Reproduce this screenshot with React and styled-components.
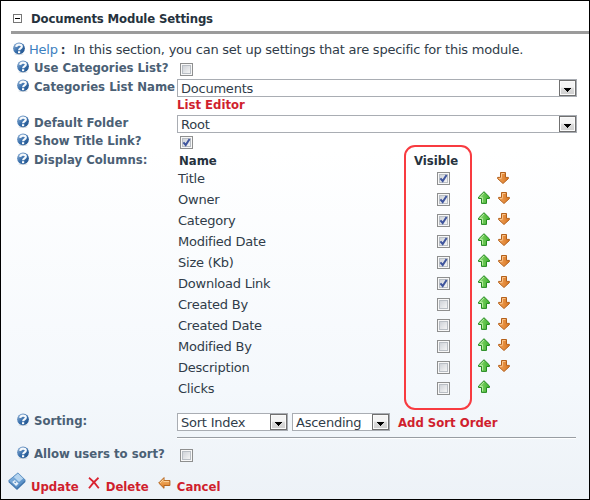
import React from "react";
import styled, { createGlobalStyle, css } from "styled-components";

const GlobalStyle = createGlobalStyle`
  * { box-sizing: border-box; }
  body { margin: 0; }
`;

const bold = css`
  font-family: "DejaVu Sans Condensed", "DejaVu Sans", sans-serif;
  font-weight: 700;
  letter-spacing: 0;
`;

const Panel = styled.main`
  width: 590px;
  height: 500px;
  display: flex;
  flex-direction: column;
  border: 1px solid #000;
  overflow: hidden;
  background: linear-gradient(#fff 0, #fff 150px, #f4f8fc 390px, #edf2f7 498px);
  color: #303c49;
  font: 13px/15px "DejaVu Sans", sans-serif;
  letter-spacing: -0.23px;
  white-space: pre;
`;

const SectionHeader = styled.header`
  display: flex;
  gap: 9px;
  height: 33px;
  margin-left: 10px;
  padding: 10px 0 0 2px;
  border-bottom: 3px solid #9b9b9b;
`;

const SectionTitle = styled.h1`
  ${bold}
  margin: 0;
  color: #26323d;
  font-size: 13px;
  letter-spacing: -0.15px;
`;

const CollapseBox = styled.span`
  display: grid;
  place-items: center;
  width: 9px;
  height: 9px;
  margin-top: 3px;
  border: 1px solid #777;
  background: #fff;
  &::after { content: ""; width: 5px; height: 1px; background: #000; }
`;

const HelpRow = styled.div`
  display: flex;
  height: 18px;
  margin: 8px 0 0 12px;
`;

const HelpLink = styled.a`
  margin-left: 4px;
  color: #3c7fc0;
`;

const HelpColon = styled.span`
  ${bold}
  margin: 0 8px 0 3px;
`;

const SettingRow = styled.div`
  display: grid;
  grid-template-columns: 160px 1fr;
  flex: none;
  height: ${(p) => p.$height}px;
  margin-left: 16px;
`;

const Label = styled.div`
  ${bold}
  display: flex;
  align-items: flex-start;
  gap: 5px;
  color: #4b6075;
`;

const RedLink = styled.a`
  ${bold}
  color: #d01f2e;
`;

const Check = styled.span`
  display: grid;
  place-items: center;
  width: 13px;
  height: 13px;
  margin: ${(p) => p.$margin || "3px 0 0 3px"};
  border: 1px solid #8e8f8f;
  background: #f5f5f5;
  box-shadow: inset 0 0 0 1px #f8f8f8, inset 0 0 0 2px #b9bec4;
  background-image: linear-gradient(135deg, #cbcfd5 10%, #f6f6f6 85%);
  svg { grid-area: 1 / 1; }
`;

const SelectBox = styled.div`
  display: flex;
  justify-content: space-between;
  width: ${(p) => p.$width}px;
  height: 18px;
  padding: 1px 0 0 3px;
  border: 1px solid #a9adb3;
  background: #fff;
`;

const SelectButton = styled.span`
  display: grid;
  place-items: center;
  width: 17px;
  height: 16px;
  margin-top: -1px;
  border: 1px solid #707070;
  background: linear-gradient(#f4f4f4 0 45%, #dcdcdc 50%, #cfcfcf);
  box-shadow: inset 0 0 0 1px #fafafa;
  padding-top: 3px;
`;

const Controls = styled.div`
  display: flex;
  gap: ${(p) => p.$gap || 0}px;
`;

const SortLink = styled(RedLink)`
  margin: 2px 0 0 4px;
`;

const Rule = styled.hr`
  width: 399px;
  height: 2px;
  margin: 6px 0 0;
  border: 0;
  border-top: 1px solid #989da3;
  background: #fff;
`;

const Columns = styled.div`
  position: relative;
  width: 400px;
  padding-top: 1px;
`;

const ColumnGrid = styled.div`
  display: grid;
  grid-template-columns: 227px 73px 20px 20px;
  height: ${(p) => p.$height}px;
  padding-left: 1px;
`;

const ColumnHeading = styled.strong`
  ${bold}
  padding-left: ${(p) => p.$indent}px;
  color: #26323d;
`;

const Highlight = styled.div`
  position: absolute;
  left: 227px;
  top: -7px;
  width: 68px;
  height: 265px;
  border: 2px solid #f83b40;
  border-radius: 11px;
`;

const MoveSlot = styled.span`
  display: block;
  height: 15px;
  margin: ${(p) => (p.$first ? "0 0 0 -1px" : "-1px 0 0")};
`;

const Footer = styled.footer`
  ${bold}
  display: flex;
  align-items: flex-start;
  margin-left: 7px;
`;

const Action = styled(RedLink)`
  margin: 7px ${(p) => p.$after}px 0 ${(p) => p.$before}px;
`;

const Icon = styled.svg`
  display: block;
  flex: none;
  margin-top: ${(p) => p.$top || 0}px;
`;

const Gradients = styled.svg`
  position: absolute;
  width: 0;
  height: 0;
`;

function HelpIcon() {
  return (
    <Icon width="12" height="13" viewBox="0 0 12 13">
      <ellipse cx="6" cy="12.1" rx="4.6" ry="0.8" fill="#a9b4c0" opacity="0.6" />
      <circle cx="6" cy="6.3" r="5.9" fill="url(#ball)" />
      <path d="M3.2 4.8C3.4 1.9 8.8 1.8 8.8 4.5C8.8 6.4 6.2 6.3 6.1 8.3" fill="none" stroke="#f6f9fc" strokeWidth="2.2" />
      <rect x="5" y="9.2" width="2.2" height="2" fill="#fff" />
    </Icon>
  );
}

function Checkbox({ checked, margin }) {
  return (
    <Check $margin={margin} role="checkbox" aria-checked={!!checked}>
      {checked && (
        <svg width="9" height="9" viewBox="0 0 9 9">
          <path d="M1.4 4.3L3.7 7L7.6 1" fill="none" stroke="#3f559d" strokeWidth="2" />
        </svg>
      )}
    </Check>
  );
}

function Select({ value, width }) {
  return (
    <SelectBox $width={width}>
      {value}
      <SelectButton>
        <svg width="7" height="4" viewBox="0 0 7 4" shapeRendering="crispEdges">
          <path d="M0 0H7V1H6V2H5V3H4V4H3V3H2V2H1V1H0Z" fill="#000" />
        </svg>
      </SelectButton>
    </SelectBox>
  );
}

function UpIcon() {
  return (
    <Icon width="12" height="13" viewBox="0 0 12 13">
      <path d="M6 .7L11.4 6V7.5H8.5V12.4H3.5V7.5H.6V6Z" fill="url(#green)" stroke="#268a22" />
      <path d="M6 2L2 6.4H4.5V11.3" fill="none" stroke="#b4ea9e" />
    </Icon>
  );
}

function DownIcon() {
  return (
    <Icon width="12" height="13" viewBox="0 0 12 13">
      <path d="M3.5 1.5H8.5V6.4H11.4V7.6L6 12.5L.6 7.6V6.4H3.5Z" fill="url(#orange)" stroke="#b3601b" />
      <path d="M4.5 6.8V2.5H7.5M2 7.4H4.5" fill="none" stroke="#f8c38b" />
    </Icon>
  );
}

function BackIcon() {
  return (
    <Icon width="13" height="12" viewBox="0 0 13 12" $top={5}>
      <path d="M6 .6V3.5H11.9V8.5H6V11.3L.7 6Z" fill="url(#orangeBack)" stroke="#b3651f" />
      <path d="M5.4 2.6L2 6M5.5 4.4H11" fill="none" stroke="#fbd29a" />
    </Icon>
  );
}

function DeleteIcon() {
  return (
    <Icon width="12" height="12" viewBox="0 0 12 12" $top={5}>
      <path d="M1 .8C4.5 3.4 7.9 7.2 10.8 11.2M10.5 .7C6.9 3.8 3.8 7.2 1 11.2" fill="none" stroke="#d92330" strokeWidth="1.8" />
    </Icon>
  );
}

function SaveIcon() {
  return (
    <Icon width="18" height="19" viewBox="0 0 18 19">
      <path d="M10 .7L17.4 8V10L9 18L.6 10.2V8.2Z" fill="#3f75ad" />
      <path d="M9.9 .9L17.2 8L8.6 15.8L.8 8.7Z" fill="url(#disk)" stroke="#5d90c3" strokeWidth=".7" />
      <path d="M5.8 5L10 1.5L15.2 6.6L11 10Z" fill="#b5d4ef" />
      <path d="M4.2 10L6.8 8L10.6 11.6L8 14Z" fill="#e9f2fa" />
      <path d="M6.1 10.2L7.2 9.3L8.4 10.4L7.3 11.3Z" fill="#5f91c4" />
    </Icon>
  );
}

const columns = [
  ["Title", true], ["Owner", true], ["Category", true], ["Modified Date", true],
  ["Size (Kb)", true], ["Download Link", true], ["Created By", false],
  ["Created Date", false], ["Modified By", false], ["Description", false], ["Clicks", false],
];

function Setting({ label, height, children }) {
  return (
    <SettingRow $height={height}>
      <Label><HelpIcon />{label}</Label>
      <div>{children}</div>
    </SettingRow>
  );
}

export default function App() {
  return (
    <Panel>
      <GlobalStyle />
      <Gradients>
        <defs>
          <linearGradient id="ball" x2="1" y2="1">
            <stop stopColor="#9dbbdc" /><stop offset=".5" stopColor="#3a70ac" /><stop offset="1" stopColor="#1b4d87" />
          </linearGradient>
          <linearGradient id="green" x2="1"><stop stopColor="#8edc75" /><stop offset="1" stopColor="#3fb02d" /></linearGradient>
          <linearGradient id="orange" x2="1"><stop stopColor="#f2a55d" /><stop offset="1" stopColor="#d8751f" /></linearGradient>
          <linearGradient id="orangeBack" x2="0" y2="1"><stop stopColor="#fbc37c" /><stop offset="1" stopColor="#d9761f" /></linearGradient>
          <linearGradient id="disk" x2="1" y2="1"><stop stopColor="#8ebbe4" /><stop offset="1" stopColor="#4a84c0" /></linearGradient>
        </defs>
      </Gradients>

      <SectionHeader>
        <CollapseBox />
        <SectionTitle>Documents Module Settings</SectionTitle>
      </SectionHeader>

      <HelpRow>
        <HelpIcon />
        <HelpLink>Help</HelpLink>
        <HelpColon>:</HelpColon>
        <span>In this section, you can set up settings that are specific for this module.</span>
      </HelpRow>

      <Setting label="Use Categories List?" height={19}><Checkbox /></Setting>
      <Setting label="Categories List Name" height={36}>
        <Select value="Documents" width={400} />
        <RedLink>List Editor</RedLink>
      </Setting>
      <Setting label="Default Folder" height={18}><Select value="Root" width={400} /></Setting>
      <Setting label="Show Title Link?" height={19}><Checkbox checked /></Setting>
      <Setting label="Display Columns:" height={261}>
        <Columns>
          <ColumnGrid $height={18}>
            <ColumnHeading $indent={1}>Name</ColumnHeading>
            <ColumnHeading $indent={9}>Visible</ColumnHeading>
          </ColumnGrid>
          {columns.map(([name, visible], i) => (
            <ColumnGrid $height={21} key={name}>
              <span>{name}</span>
              <Checkbox checked={visible} margin="1px 0 0 32px" />
              <MoveSlot>{i > 0 && <UpIcon />}</MoveSlot>
              <MoveSlot $first={i === 0}>{i < columns.length - 1 && <DownIcon />}</MoveSlot>
            </ColumnGrid>
          ))}
          <Highlight />
        </Columns>
      </Setting>
      <Setting label="Sorting:" height={33}>
        <Controls $gap={4}>
          <Select value="Sort Index" width={111} />
          <Select value="Ascending" width={98} />
          <SortLink>Add Sort Order</SortLink>
        </Controls>
        <Rule />
      </Setting>
      <Setting label="Allow users to sort?" height={26}><Checkbox /></Setting>

      <Footer>
        <SaveIcon />
        <Action $before={5} $after={9}>Update</Action>
        <DeleteIcon />
        <Action $before={6} $after={9}>Delete</Action>
        <BackIcon />
        <Action $before={6} $after={0}>Cancel</Action>
      </Footer>
    </Panel>
  );
}
